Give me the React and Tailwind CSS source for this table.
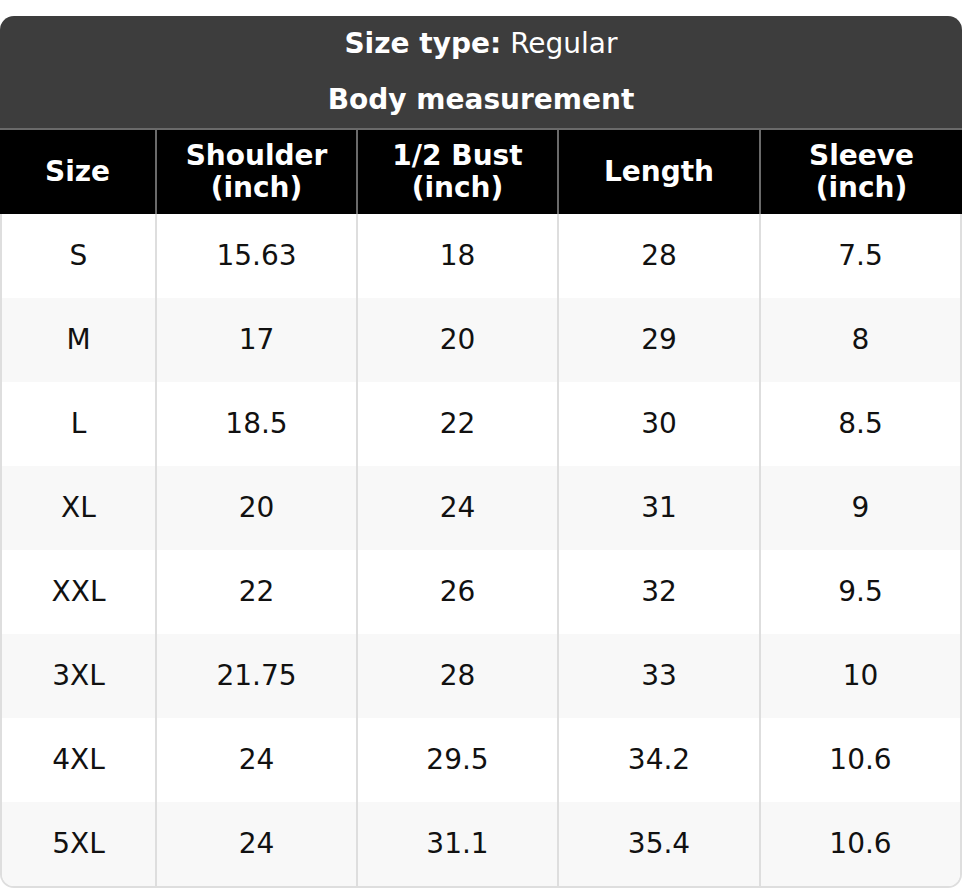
import React from "react";

const columns = ["Size", "Shoulder\n(inch)", "1/2 Bust\n(inch)", "Length", "Sleeve\n(inch)"];

const rows = [
  ["S", "15.63", "18", "28", "7.5"],
  ["M", "17", "20", "29", "8"],
  ["L", "18.5", "22", "30", "8.5"],
  ["XL", "20", "24", "31", "9"],
  ["XXL", "22", "26", "32", "9.5"],
  ["3XL", "21.75", "28", "33", "10"],
  ["4XL", "24", "29.5", "34.2", "10.6"],
  ["5XL", "24", "31.1", "35.4", "10.6"],
];

const App = () => {
  return (
    <div className="bg-white pt-4 font-['DejaVu_Sans',sans-serif] text-[28px]">
      <div className="rounded-t-[14px] bg-[#3d3d3d] text-white">
        <div className="h-[56px] flex items-center justify-center">
          <span className="font-bold mr-[9px]">Size type:</span>
          <span>Regular</span>
        </div>
        <div className="h-[56px] flex items-center justify-center font-bold">
          Body measurement
        </div>
      </div>
      <div className="grid grid-cols-[155px_201px_201px_202px_1fr] bg-black text-white font-bold border-t-2 border-[#6a6a6a]">
        {columns.map((c, i) => (
          <div
            key={c}
            className={
              "h-[84px] flex items-center justify-center text-center whitespace-pre-line leading-[32px] " +
              (i > 0 ? "border-l-2 border-[#6a6a6a]" : "")
            }
          >
            {c}
          </div>
        ))}
      </div>
      <div className="border-x-2 border-b-2 border-[#dedede] rounded-b-[14px] overflow-hidden text-[#111]">
        {rows.map((r, ri) => (
          <div
            key={r[0]}
            className={`grid grid-cols-[153px_201px_201px_202px_1fr] ${ri % 2 === 1 ? "bg-[#f8f8f8]" : "bg-white"}`}
          >
            {r.map((v, i) => (
              <div
                key={i}
                className={
                  "h-[84px] flex items-center justify-center " +
                  (i > 0 ? "border-l-2 border-[#dedede]" : "")
                }
              >
                {v}
              </div>
            ))}
          </div>
        ))}
      </div>
    </div>
  );
};

export default App;
